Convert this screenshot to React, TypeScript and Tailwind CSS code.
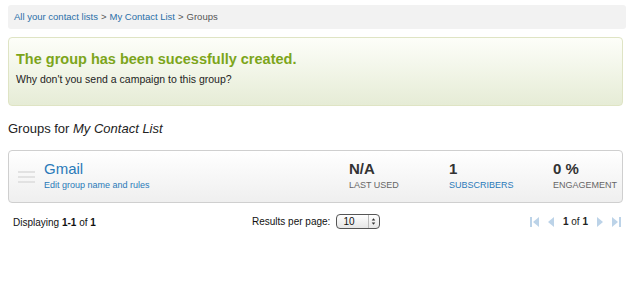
export default function App() {
  return (
    <div className="w-[634px] h-[282px] bg-white px-2 pt-[5px] font-['Liberation_Sans',Arial,sans-serif]">
      <div className="h-[24px] rounded-[3px] bg-[#f2f2f2] pl-[6px] flex items-center text-[9.5px] text-[#555]">
        <a className="text-[#2a6fa8]">All your contact lists</a>
        <span className="mx-[3px]">&gt;</span>
        <a className="text-[#2a6fa8]">My Contact List</a>
        <span className="mx-[3px]">&gt;</span>
        <span>Groups</span>
      </div>

      <div className="mt-[8px] h-[69px] w-[615px] rounded-[4px] border border-[#dfe4c4] bg-gradient-to-b from-[#fdfef9] to-[#e6ecd6] pl-[7px] pt-[12px]">
        <h2 className="text-[14.5px] font-bold text-[#7ca51a] leading-[18px]">The group has been sucessfully created.</h2>
        <p className="mt-[4px] text-[10.5px] text-[#222]">Why don't you send a campaign to this group?</p>
      </div>

      <h3 className="mt-[15px] text-[13px] text-[#222] leading-[16px]">
        Groups for <em>My Contact List</em>
      </h3>

      <div className="mt-[13px] h-[53px] w-[615px] rounded-[4px] border border-[#cfcfcf] bg-gradient-to-b from-white to-[#efefef] flex items-center">
        <div className="ml-[9px] w-[17px] flex flex-col gap-[3px]">
          <div className="h-[2px] bg-[#e2e2e2]" />
          <div className="h-[2px] bg-[#e2e2e2]" />
          <div className="h-[2px] bg-[#e2e2e2]" />
        </div>
        <div className="ml-[9px] w-[305px]">
          <div className="text-[15px] leading-[17px] text-[#2a7ab9]">Gmail</div>
          <div className="mt-[2px] text-[9px] text-[#2a7ab9]">Edit group name and rules</div>
        </div>
        <div className="w-[100px]">
          <div className="text-[15px] leading-[17px] font-bold text-[#333]">N/A</div>
          <div className="mt-[2px] text-[9px] text-[#666]">LAST USED</div>
        </div>
        <div className="w-[104px]">
          <div className="text-[15px] leading-[17px] font-bold text-[#333]">1</div>
          <div className="mt-[2px] text-[9px] text-[#2a7ab9]">SUBSCRIBERS</div>
        </div>
        <div>
          <div className="text-[15px] leading-[17px] font-bold text-[#333]">0 %</div>
          <div className="mt-[2px] text-[9px] text-[#666]">ENGAGEMENT</div>
        </div>
      </div>

      <div className="mt-[10px] w-[615px] flex items-center text-[10px] text-[#111]">
        <div className="ml-[5px] w-[239px] pt-[2px]">
          Displaying <b>1-1</b> of <b>1</b>
        </div>
        <div className="flex items-center">
          <span>Results per page:</span>
          <div className="ml-[6px] h-[15px] w-[44px] rounded-[4px] border border-[#555] bg-gradient-to-b from-white to-[#e6e6e6] flex items-center text-[10px]">
            <span className="ml-[6px] flex-1">10</span>
            <svg width="10" height="13" viewBox="0 0 10 13" className="mr-[1px] border-l border-[#bbb]">
              <path d="M5 3 L7 5.5 L3 5.5 Z M5 10 L7 7.5 L3 7.5 Z" fill="#333" />
            </svg>
          </div>
        </div>
        <div className="ml-auto mr-[2px] flex items-center gap-[9px]">
          <svg width="9" height="10" viewBox="0 0 9 10">
            <rect x="0" y="0" width="2" height="10" fill="#bcd3e8" />
            <path d="M9 0 L3 5 L9 10 Z" fill="#bcd3e8" />
          </svg>
          <svg width="6" height="10" viewBox="0 0 6 10">
            <path d="M6 0 L0 5 L6 10 Z" fill="#bcd3e8" />
          </svg>
          <span className="text-[10px] text-[#222]"><b>1</b> of <b>1</b></span>
          <svg width="6" height="10" viewBox="0 0 6 10">
            <path d="M0 0 L6 5 L0 10 Z" fill="#bcd3e8" />
          </svg>
          <svg width="9" height="10" viewBox="0 0 9 10">
            <path d="M0 0 L6 5 L0 10 Z" fill="#bcd3e8" />
            <rect x="7" y="0" width="2" height="10" fill="#bcd3e8" />
          </svg>
        </div>
      </div>
    </div>
  );
}
